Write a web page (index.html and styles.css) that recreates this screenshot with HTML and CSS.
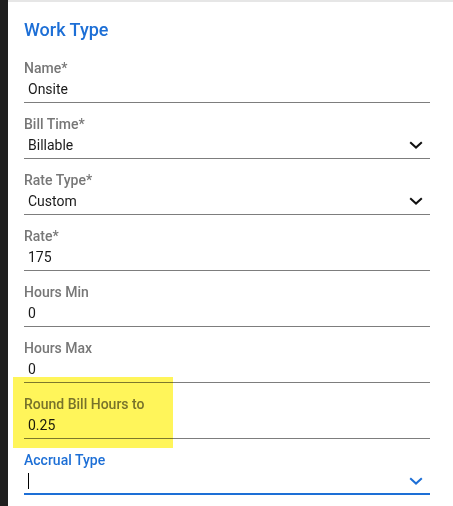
FILE: index.html
```html
<!DOCTYPE html>
<html>
<head>
<meta charset="utf-8">
<link rel="stylesheet" href="styles.css">
</head>
<body>
<div class="sidebar"></div>
<div class="main">
  <h1 class="title">Work Type</h1>
  <div class="form">
    <div class="field">
      <div class="label">Name*</div>
      <div class="value">Onsite</div>
    </div>
    <div class="field">
      <div class="label">Bill Time*</div>
      <div class="value"><span>Billable</span><svg class="chev" viewBox="0 0 14 8" width="14" height="8"><path d="M1.2 1.2 L7 6.6 L12.8 1.2" /></svg></div>
    </div>
    <div class="field">
      <div class="label">Rate Type*</div>
      <div class="value"><span>Custom</span><svg class="chev" viewBox="0 0 14 8" width="14" height="8"><path d="M1.2 1.2 L7 6.6 L12.8 1.2" /></svg></div>
    </div>
    <div class="field">
      <div class="label">Rate*</div>
      <div class="value">175</div>
    </div>
    <div class="field">
      <div class="label">Hours Min</div>
      <div class="value">0</div>
    </div>
    <div class="field">
      <div class="label">Hours Max</div>
      <div class="value">0</div>
    </div>
    <div class="field">
      <div class="label">Round Bill Hours to</div>
      <div class="value">0.25</div>
    </div>
    <div class="field focused">
      <div class="label">Accrual Type</div>
      <div class="value"><span class="caret"></span><svg class="chev" viewBox="0 0 14 8" width="14" height="8"><path d="M1.2 1.2 L7 6.6 L12.8 1.2" /></svg></div>
    </div>
  </div>
</div>
<div class="highlight"></div>
</body>
</html>
```

FILE: styles.css
```css
html, body {
  margin: 0;
  padding: 0;
  background: #ffffff;
}
body {
  display: flex;
  min-height: 506px;
  font-family: Roboto, "Liberation Sans", sans-serif;
}
.sidebar {
  width: 8px;
  flex: 0 0 8px;
  background: #1f1f1f;
}
.main {
  flex: 1;
  border-top: 2px solid #e6e6e6;
  padding: 16px 23px 0 16px;
}
.title {
  margin: 0;
  font-size: 18px;
  line-height: 24px;
  font-weight: 500;
  color: #1d6fd6;
}
.form {
  margin-top: 18px;
}
.field {
  margin-bottom: 13px;
}
.label {
  font-size: 14px;
  line-height: 16px;
  font-weight: 500;
  color: #777777;
}
.value {
  display: flex;
  align-items: center;
  justify-content: space-between;
  height: 20px;
  padding: 3px 0 3px 4px;
  font-size: 14px;
  line-height: 20px;
  color: #1a1a1a;
  border-bottom: 1px solid #7d7d7d;
}
.chev {
  margin-right: 7px;
  fill: none;
  stroke: #111111;
  stroke-width: 2;
}
.focused .label {
  color: #1d6fd6;
}
.focused .value {
  padding-bottom: 2px;
  border-bottom: 2px solid #1d6fd6;
}
.focused .chev {
  stroke: #1d6fd6;
}
.caret {
  display: block;
  width: 1px;
  height: 16px;
  background: #000000;
}
.highlight {
  position: absolute;
  left: 13px;
  top: 377px;
  width: 160px;
  height: 71px;
  background: #fff55a;
  mix-blend-mode: multiply;
}
```
